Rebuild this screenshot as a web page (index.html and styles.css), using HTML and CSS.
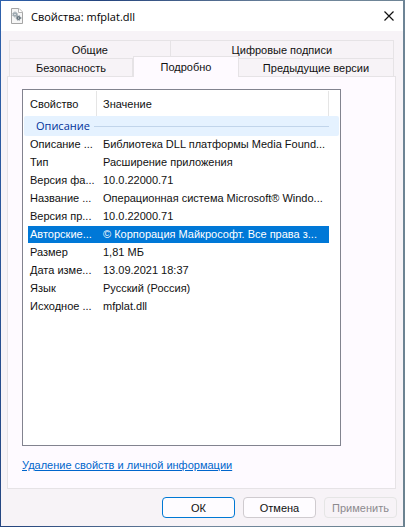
FILE: index.html
```
<!DOCTYPE html>
<html lang="ru">

<head>
    <meta charset="UTF-8">
    <meta name="viewport" content="width=device-width, initial-scale=1.0">
    <title>Свойства: mfplat.dll</title>
    <link rel="stylesheet" href="styles.css">
</head>

<body>
    <div class="window">
        <header class="titlebar">
            <svg class="file-icon" width="12" height="16" viewBox="0 0 12 16" fill="none">
                <path d="M.5.5h7.500l3.500 3.500v11.500h-11z" fill="#f6f6f6" stroke="#a5a5a5" />
                <path d="M7.500.5v4h4" fill="#fff" stroke="#b5b5b5" />
                <circle cx="4" cy="6.500" r="1.500" stroke="#9aa6ad" stroke-width="1.500" />
                <circle cx="4" cy="6.500" r="2.500" stroke="#9aa6ad" stroke-dasharray="1 1" />
                <circle cx="7.500" cy="10" r="1.300" stroke="#66757f" stroke-width="1.500" />
                <circle cx="7.500" cy="10" r="2.300" stroke="#66757f" stroke-dasharray="1 1" />
            </svg>
            <h1>Свойства: mfplat.dll</h1>
            <button class="close" aria-label="Закрыть">
                <svg width="10" height="10" viewBox="0 0 10 10">
                    <path d="M.5.5l9 9M9.500.5l-9 9" stroke="#111" stroke-width="1.200" />
                </svg>
            </button>
        </header>

        <main>
            <div class="tabs" role="tablist">
                <div class="tab-row">
                    <button class="tab general" role="tab">Общие</button>
                    <button class="tab" role="tab">Цифровые подписи</button>
                </div>
                <div class="tab-row">
                    <button class="tab security" role="tab">Безопасность</button>
                    <button class="tab active" role="tab" aria-selected="true">Подробно</button>
                    <button class="tab" role="tab">Предыдущие версии</button>
                </div>
            </div>

            <section class="panel" role="tabpanel">
                <div class="list">
                    <table>
                        <thead>
                            <tr>
                                <th class="name"><div>Свойство</div></th>
                                <th class="value"><div>Значение</div></th>
                            </tr>
                        </thead>
                        <tbody>
                            <tr>
                                <th class="group" colspan="2"><div>Описание</div></th>
                            </tr>
                            <tr><td>Описание ...</td><td>Библиотека DLL платформы Media Found...</td></tr>
                            <tr><td>Тип</td><td>Расширение приложения</td></tr>
                            <tr><td>Версия фа...</td><td>10.0.22000.71</td></tr>
                            <tr><td>Название ...</td><td>Операционная система Microsoft® Windo...</td></tr>
                            <tr><td>Версия пр...</td><td>10.0.22000.71</td></tr>
                            <tr class="selected"><td>Авторские...</td><td>© Корпорация Майкрософт. Все права з...</td></tr>
                            <tr><td>Размер</td><td>1,81 МБ</td></tr>
                            <tr><td>Дата изме...</td><td>13.09.2021 18:37</td></tr>
                            <tr><td>Язык</td><td>Русский (Россия)</td></tr>
                            <tr><td>Исходное ...</td><td>mfplat.dll</td></tr>
                        </tbody>
                    </table>
                </div>
                <a class="remove" href="#">Удаление свойств и личной информации</a>
            </section>
        </main>

        <footer>
            <button class="btn primary">ОК</button>
            <button class="btn">Отмена</button>
            <button class="btn" disabled>Применить</button>
        </footer>
    </div>
</body>

</html>
```
FILE: styles.css
```
* {
    box-sizing: border-box;
}

body {
    margin: 0;
    padding: 1px 2px 1px 1px;
    height: 100vh;
    background: linear-gradient(100deg, #2f62ad 0%, #24447e 20%, #71879c 60%, #6b8290 100%);
    font-family: "Liberation Sans", Arial, sans-serif;
    font-size: 11px;
    color: #111;
}

button {
    font: inherit;
    color: inherit;
    padding: 0;
}

.window {
    height: 100%;
    display: flex;
    flex-direction: column;
    background: #f7f3f7;
}

/* Title bar */
.titlebar {
    height: 30px;
    display: flex;
    align-items: center;
    padding: 0 9px 0 10px;
    background: #fff;
}

.titlebar h1 {
    flex: 1;
    margin: 0 0 0 8px;
    font-family: "Open Sans", "Noto Sans", sans-serif;
    font-size: 11px;
    font-weight: 400;
    color: #000;
}

.file-icon {
    display: block;
}

.close {
    display: flex;
    border: none;
    background: none;
}

/* Tabs */
main {
    flex: 1;
    display: flex;
    flex-direction: column;
    padding: 9px 7px 0 6px;
}

.tabs {
    padding: 0 2px;
}

.tab-row {
    display: flex;
    height: 18px;
}

.tab {
    flex: 1;
    border: 1px solid #e6e3e6;
    border-width: 1px 1px 0 0;
    background: #f7f3f7;
}

.tab:first-child {
    border-left-width: 1px;
}

.tab.general {
    flex: 0 0 42%;
}

.tab.security {
    flex: 0 0 124px;
}

.tab.active {
    flex: 0 0 106px;
    height: 21px;
    margin-top: -2px;
    border-left-width: 1px;
    background: #fefaff;
    z-index: 1;
}

.panel {
    flex: 1;
    padding: 12px 54px 14px 14px;
    border: 1px solid #e6e3e6;
    background: #fefaff;
    display: flex;
    flex-direction: column;
    align-items: flex-start;
}

/* Property list */
.list {
    flex: 1;
    width: 100%;
    padding: 1px;
    margin-bottom: 10px;
    border: 1px solid #82838f;
    background: #fff;
}

table {
    width: 100%;
    table-layout: fixed;
    border-collapse: separate;
    border-spacing: 0;
}

th,
td {
    padding: 0;
    text-align: left;
    font-weight: 400;
    white-space: nowrap;
}

th.name {
    width: 73px;
}

thead div {
    height: 25px;
    line-height: 26px;
    padding-left: 6px;
    border-right: 1px solid #e5e5e5;
}

.value div {
    margin-right: 10px;
}

.group {
    height: 20px;
    padding: 0 10px 0 12px;
    border-radius: 2px;
    background: #e5f2ff;
    color: #003399;
    font-family: "Open Sans", "Noto Sans", sans-serif;
}

.group div {
    display: flex;
    align-items: center;
    gap: 4px;
    line-height: 20px;
}

.group div::after {
    content: "";
    flex: 1;
    height: 1px;
    background: #c1d5eb;
}

td {
    height: 18px;
    line-height: 17px;
    padding-left: 2px;
    border-left: 4px solid transparent;
    border-bottom: 1px solid transparent;
    background-clip: padding-box;
}

td + td {
    padding-left: 6px;
    border-left: none;
    border-right: 10px solid transparent;
}

.selected td {
    background-color: #0078d7;
    color: #fff;
}

.remove {
    line-height: 18px;
    color: #0066cc;
}

/* Buttons */
footer {
    display: flex;
    justify-content: flex-end;
    gap: 8px;
    padding: 8px 6px;
}

.btn {
    width: 73px;
    height: 21px;
    border: 1px solid #cfcbcf;
    border-radius: 4px;
    background: #fefcff;
}

.btn.primary {
    border-color: #0078d4;
}

.btn:disabled {
    border-color: #e5e5e5;
    background: #f7f3f7;
    color: #8c8a8e;
}
```
